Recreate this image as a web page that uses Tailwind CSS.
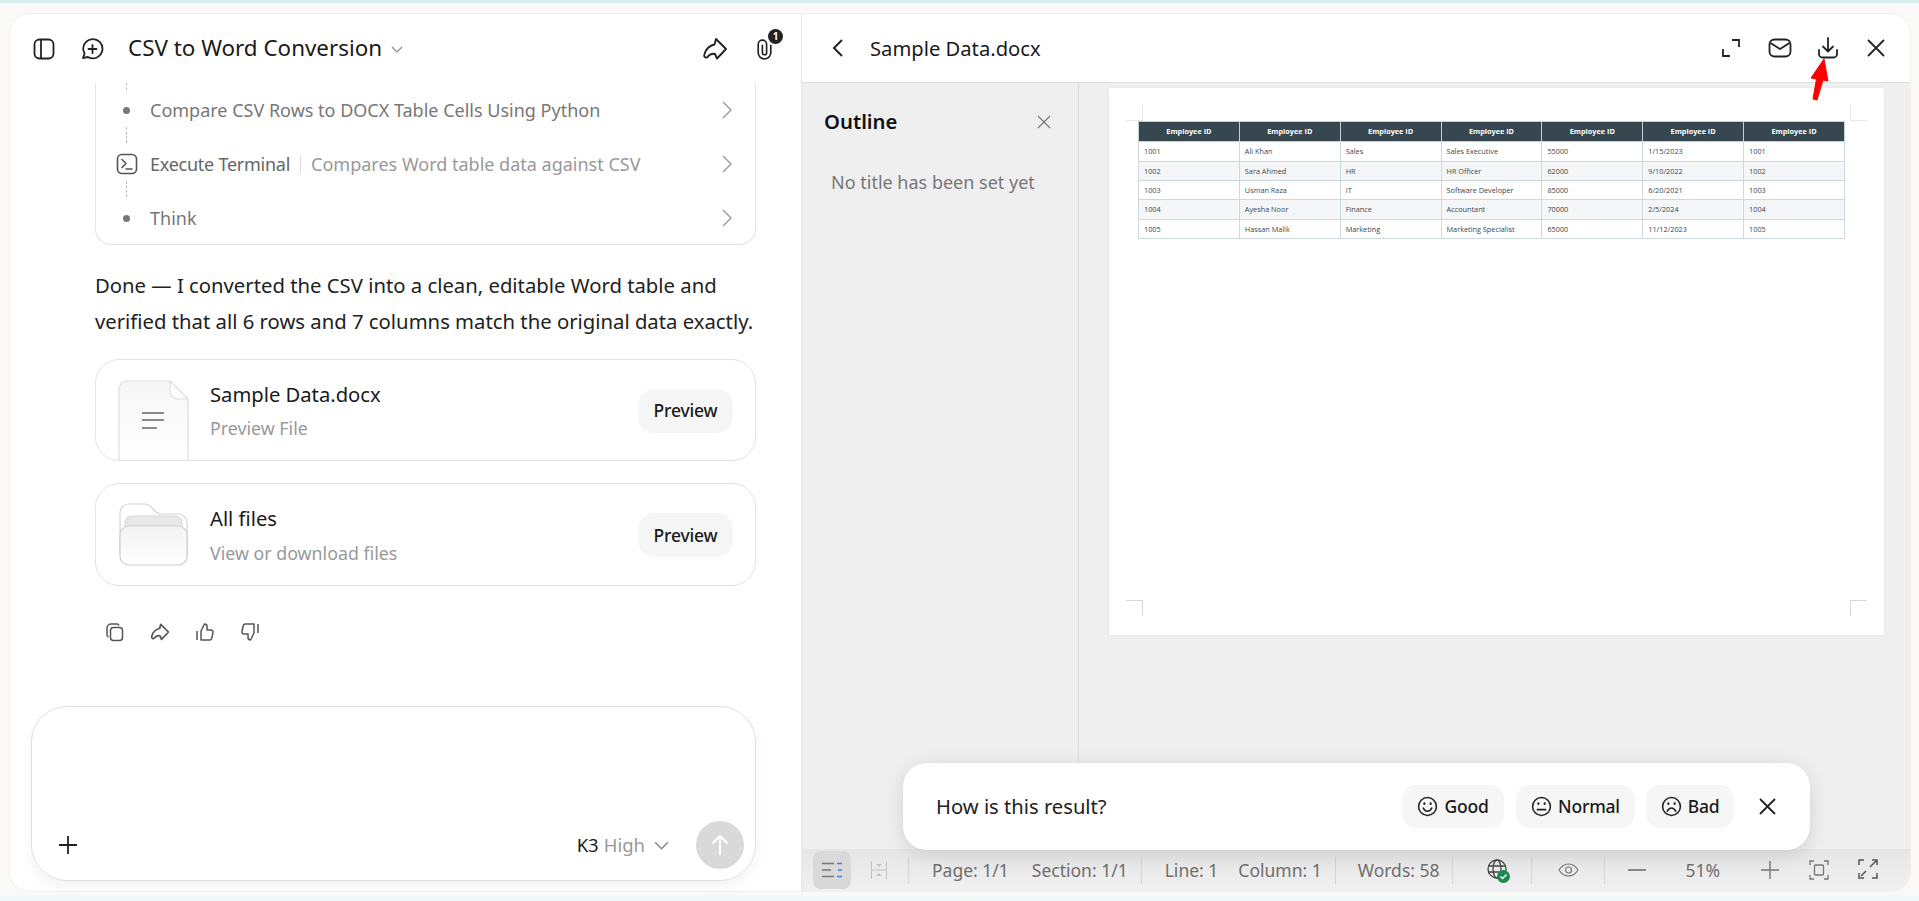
<!DOCTYPE html>
<html lang="en">
<head>
  <meta charset="UTF-8">
  <title>CSV to Word Conversion</title>
  <script src="https://cdn.jsdelivr.net/npm/@tailwindcss/browser@4"></script>
</head>
<body class="h-[901px] w-[1919px] overflow-hidden bg-[#f0f9f8] font-['Noto_Sans',sans-serif] text-[#1a1a1a]">
  <div class="h-[896px] border-t-[3px] border-t-[#dcefec] bg-[#faf9f7] pt-[10px] pl-[9px] pr-[8px]">
    <div class="flex h-[879px] rounded-[20px] border border-[#f0f0f0] bg-white overflow-hidden">

      <!-- chat column -->
      <div class="flex w-[791px] shrink-0 flex-col">
        <div class="flex h-[69px] shrink-0 items-center">
          <svg class="ml-[23px]" width="22" height="22" viewBox="0 0 22 22" fill="none" stroke="#222" stroke-width="1.8"><rect x="1.5" y="1.5" width="19" height="19" rx="5"/><path d="M8 2v18"/></svg>
          <svg class="ml-[25px]" width="24" height="24" viewBox="0 0 24 24" fill="none" stroke="#222" stroke-width="1.8" stroke-linecap="round" stroke-linejoin="round"><path d="M3 21l1.6-4.4A9.6 9.6 0 1 1 8 20z"/><path d="M12.5 8v8M8.5 12h8"/></svg>
          <span class="ml-[24px] text-[22.400px] leading-none whitespace-nowrap">CSV to Word Conversion</span>
          <svg class="ml-[8px]" width="14" height="14" viewBox="0 0 14 14" fill="none" stroke="#888" stroke-width="1.2"><path d="M2 5l5 5 5-5"/></svg>
          <svg class="ml-auto" width="26" height="24" viewBox="0 0 26 24" fill="none" stroke="#222" stroke-width="1.9" stroke-linejoin="round"><path d="M14 2L24 12l-9 9.500-2-4.500c-4-1-6 1-8 3.500-2 .5-3.500-1-2.500-3.500C4 12 8 8.500 12.500 7.500z"/></svg>
          <div class="relative ml-[23px] mr-[24px] flex h-[26px] w-[26px] items-center justify-center">
            <svg width="15" height="22" viewBox="0 0 14 21" fill="none" stroke="#222" stroke-width="1.600" stroke-linecap="round"><path d="M13 7v7a6 6 0 0 1-12 0V6a4 4 0 0 1 8 0v8a2 2 0 0 1-4 0V7"/></svg>
            <span class="absolute -right-[6px] -top-[7px] flex h-[15px] w-[15px] items-center justify-center rounded-full bg-[#222] text-[10px] font-bold leading-none text-white">1</span>
          </div>
        </div>

        <div class="flex-1 overflow-hidden pl-[85px]">
          <!-- steps card, scrolled so its top is cut off -->
          <div class="w-[661px] rounded-b-[16px] border border-t-0 border-[#e3e3e3] text-[18px] text-[#777]">
            <div class="relative flex h-[54px] items-center">
              <div class="absolute left-[30px] top-0 h-[7px] border-l border-dashed border-[#bbb]"></div>
              <div class="absolute bottom-[-6px] left-[30px] h-[16px] border-l border-dashed border-[#bbb]"></div>
              <div class="ml-[27px] h-[7px] w-[7px] rounded-full bg-[#777]"></div>
              <span class="ml-[20px] whitespace-nowrap">Compare CSV Rows to DOCX Table Cells Using Python</span>
              <svg class="ml-auto mr-[23px]" width="10" height="18" viewBox="0 0 10 18" fill="none" stroke="#999" stroke-width="1.4"><path d="M1 1l8 8-8 8"/></svg>
            </div>
            <div class="relative flex h-[54px] items-center">
              <div class="absolute bottom-[-6px] left-[30px] h-[16px] border-l border-dashed border-[#bbb]"></div>
              <svg class="ml-[20px]" width="22" height="22" viewBox="0 0 22 22" fill="none" stroke="#555" stroke-width="1.6" stroke-linecap="round" stroke-linejoin="round"><rect x="1.500" y="1.500" width="19" height="19" rx="4.500"/><path d="M6 6.500l4 4-4 4M10 16h6"/></svg>
              <span class="ml-[12px] whitespace-nowrap tracking-[-0.25px] text-[#666]">Execute Terminal</span>
              <div class="mx-[10px] h-[19px] border-l border-[#ddd]"></div>
              <span class="whitespace-nowrap text-[#999]">Compares Word table data against CSV</span>
              <svg class="ml-auto mr-[23px]" width="10" height="18" viewBox="0 0 10 18" fill="none" stroke="#999" stroke-width="1.4"><path d="M1 1l8 8-8 8"/></svg>
            </div>
            <div class="flex h-[53px] items-center pt-[1px]">
              <div class="ml-[27px] h-[7px] w-[7px] rounded-full bg-[#777]"></div>
              <span class="ml-[20px]">Think</span>
              <svg class="ml-auto mr-[23px]" width="10" height="18" viewBox="0 0 10 18" fill="none" stroke="#999" stroke-width="1.4"><path d="M1 1l8 8-8 8"/></svg>
            </div>
          </div>

          <p class="mt-[22px] w-[680px] text-[20.300px] leading-[36px] whitespace-nowrap text-[#222]">Done — I converted the CSV into a clean, editable Word table and<br>verified that all 6 rows and 7 columns match the original data exactly.</p>

          <div class="mt-[20px] flex h-[102px] w-[661px] items-center overflow-hidden rounded-[24px] border border-[#e3e3e3]">
            <svg class="ml-[22px] mt-[22px] shrink-0" width="71" height="82" viewBox="0 0 71 82">
              <defs><linearGradient id="docFill" x1="0" y1="0" x2="0" y2="1"><stop offset="0" stop-color="#f6f6f6"/><stop offset="1" stop-color="#ffffff"/></linearGradient></defs>
              <path d="M1 82V9a8 8 0 0 1 8-8h43l18 18v63" fill="url(#docFill)" stroke="#dedede" stroke-width="1.200"/>
              <path d="M52 1v10a8 8 0 0 0 8 8h10z" fill="#fff" stroke="#dedede" stroke-width="1.200"/>
              <path d="M24 33h22M24 40h22M24 48h15" stroke="#666" stroke-width="1.600"/>
            </svg>
            <div class="ml-[21px]">
              <div class="text-[20.200px] leading-[28px]">Sample Data.docx</div>
              <div class="mt-[8px] text-[17.800px] leading-[24px] text-[#999]">Preview File</div>
            </div>
            <div class="ml-auto mr-[22px] mt-[1px] flex h-[44px] w-[95px] items-center justify-center rounded-[16px] bg-[#f6f6f6] text-[17.500px] font-[550] tracking-[-0.2px]">Preview</div>
          </div>

          <div class="mt-[22px] flex h-[103px] w-[661px] items-center rounded-[24px] border border-[#e3e3e3]">
            <svg class="ml-[23px] shrink-0" width="69" height="63" viewBox="0 0 69 63">
              <defs><linearGradient id="folderFill" x1="0" y1="0" x2="0" y2="1"><stop offset="0" stop-color="#f3f3f3"/><stop offset="1" stop-color="#ffffff"/></linearGradient></defs>
              <path d="M1 52V10a9 9 0 0 1 9-9h16a8 8 0 0 1 6 3l5 5a6 6 0 0 0 4 2h18a9 9 0 0 1 9 9v32z" fill="#fff" stroke="#d4d4d4" stroke-width="1.200"/>
              <rect x="6" y="13" width="57" height="30" rx="7" fill="#e8e8e8" stroke="#d8d8d8" stroke-width="1.200"/>
              <rect x="1" y="23" width="67" height="39" rx="9" fill="url(#folderFill)" stroke="#cfcfcf" stroke-width="1.200"/>
            </svg>
            <div class="ml-[22px]">
              <div class="text-[20.200px] leading-[28px]">All files</div>
              <div class="mt-[9px] text-[17.800px] leading-[24px] text-[#999]">View or download files</div>
            </div>
            <div class="ml-auto mr-[22px] mt-[1px] flex h-[44px] w-[95px] items-center justify-center rounded-[16px] bg-[#f6f6f6] text-[17.500px] font-[550] tracking-[-0.2px]">Preview</div>
          </div>

          <div class="ml-[10px] mt-[36px] flex h-[20px] items-center gap-[25px]">
            <svg width="20" height="20" viewBox="0 0 20 20" fill="none" stroke="#555" stroke-width="1.500"><rect x="5.500" y="5.500" width="12" height="13" rx="3"/><path d="M14 3.500A2.500 2.500 0 0 0 12 2H6a4 4 0 0 0-4 4v7a2.500 2.500 0 0 0 1.500 2"/></svg>
            <svg width="20" height="20" viewBox="0 0 26 24" fill="none" stroke="#555" stroke-width="2.200" stroke-linejoin="round"><path d="M14 2L24 12l-9 9.500-2-4.500c-4-1-6 1-8 3.500-2 .5-3.500-1-2.500-3.500C4 12 8 8.500 12.500 7.500z"/></svg>
            <svg width="20" height="20" viewBox="0 0 20 20" fill="none" stroke="#555" stroke-width="1.500" stroke-linejoin="round"><path d="M6 9l3.500-7c1.500 0 2.500 1 2.500 2.500V8h4a2 2 0 0 1 2 2.500l-1.300 6A2 2 0 0 1 14.800 18H6zM2 9v9"/></svg>
            <svg width="20" height="20" viewBox="0 0 20 20" fill="none" stroke="#555" stroke-width="1.500" stroke-linejoin="round"><path d="M14 11l-3.500 7c-1.500 0-2.500-1-2.500-2.500V12H4a2 2 0 0 1-2-2.500l1.300-6A2 2 0 0 1 5.200 2H14zM18 2v9"/></svg>
          </div>
        </div>

        <div class="relative mb-[10px] ml-[21px] h-[175px] w-[725px] shrink-0 rounded-[36px] border border-[#e0e0e0] shadow-[0_6px_14px_rgba(0,0,0,0.05)]">
          <div class="absolute inset-x-0 bottom-0 flex h-[70px] items-center">
            <svg class="ml-[26px]" width="20" height="20" viewBox="0 0 20 20" fill="none" stroke="#222" stroke-width="1.800"><path d="M10 1v18M1 10h18"/></svg>
            <span class="ml-auto text-[18.500px]">K3</span>
            <span class="ml-[5px] text-[18.500px] text-[#999]">High</span>
            <svg class="ml-[8px]" width="17" height="17" viewBox="0 0 16 16" fill="none" stroke="#888" stroke-width="1.400"><path d="M2 5l6 6 6-6"/></svg>
            <div class="ml-[26px] mr-[11px] flex h-[48px] w-[48px] items-center justify-center rounded-full bg-[#d9d9d9]">
              <svg width="20" height="22" viewBox="0 0 20 22" fill="none" stroke="#fff" stroke-width="2" stroke-linecap="round" stroke-linejoin="round"><path d="M10 20V2M3 9l7-7 7 7"/></svg>
            </div>
          </div>
        </div>
      </div>

      <!-- document preview column -->
      <div class="relative flex flex-1 flex-col border-l border-[#e6e6e6]">
        <div class="flex h-[69px] shrink-0 items-center border-b border-[#dedede]">
          <svg class="ml-[29px]" width="13" height="20" viewBox="0 0 13 20" fill="none" stroke="#222" stroke-width="2"><path d="M11 2l-8 8 8 8"/></svg>
          <span class="ml-[26px] text-[20.200px]">Sample Data.docx</span>
          <svg class="ml-auto" width="20" height="20" viewBox="0 0 20 20" fill="none" stroke="#222" stroke-width="1.800"><path d="M11 2h7v7M9 18H2v-7"/></svg>
          <svg class="ml-[27px]" width="24" height="20" viewBox="0 0 24 20" fill="none" stroke="#222" stroke-width="1.800" stroke-linejoin="round"><rect x="1.500" y="1.500" width="21" height="17" rx="5"/><path d="M2.500 5l9.500 6 9.500-6"/></svg>
          <svg class="ml-[25px]" width="22" height="22" viewBox="0 0 22 22" fill="none" stroke="#222" stroke-width="1.800" stroke-linecap="round" stroke-linejoin="round"><path d="M11 1v13M6 9.500l5 5 5-5"/><path d="M2 13v4a3.500 3.500 0 0 0 3.500 3.500h11A3.500 3.500 0 0 0 20 17v-4"/></svg>
          <svg class="ml-[28px] mr-[25px]" width="18" height="18" viewBox="0 0 18 18" fill="none" stroke="#222" stroke-width="1.800"><path d="M1 1l16 16M17 1L1 17"/></svg>
        </div>

        <div class="flex min-h-0 flex-1 bg-[#efefef]">
          <div class="w-[277px] shrink-0 border-r border-[#dcdcdc]">
            <div class="flex h-[76px] items-center pl-[22px] pt-[1px]">
              <span class="text-[20.300px] font-semibold text-[#111]">Outline</span>
              <svg class="ml-auto mr-[27px]" width="14" height="14" viewBox="0 0 14 14" fill="none" stroke="#777" stroke-width="1.200"><path d="M1 1l12 12M13 1L1 13"/></svg>
            </div>
            <div class="mt-[5px] pl-[29px] text-[18px] leading-[36px] text-[#777]">No title has been set yet</div>
          </div>

          <div class="min-w-0 flex-1 pl-[30px] pt-[5px]">
            <div class="relative h-[547px] w-[775px] bg-white shadow-[0_0_3px_rgba(0,0,0,0.06)]">
              <!-- page margin marks -->
              <div class="absolute left-[17px] top-[17px] h-[16px] w-[17px] border-b border-r border-[#e6e6e6]"></div>
              <div class="absolute right-[17px] top-[17px] h-[16px] w-[17px] border-b border-l border-[#e6e6e6]"></div>
              <div class="absolute left-[17px] top-[512px] h-[16px] w-[17px] border-r border-t border-[#d8d8d8]"></div>
              <div class="absolute right-[17px] top-[512px] h-[16px] w-[17px] border-l border-t border-[#d8d8d8]"></div>

              <table class="absolute left-[29px] top-[33px] w-[707px] table-fixed border-collapse font-['Open_Sans',sans-serif] text-[7.300px] text-[#3a4650]">
                <tbody>
                  <tr class="h-[20px] bg-[#37474f] text-center font-bold text-white">
                    <td class="border border-[#c6d0d4]">Employee ID</td><td class="border border-[#c6d0d4]">Employee ID</td><td class="border border-[#c6d0d4]">Employee ID</td><td class="border border-[#c6d0d4]">Employee ID</td><td class="border border-[#c6d0d4]">Employee ID</td><td class="border border-[#c6d0d4]">Employee ID</td><td class="border border-[#c6d0d4]">Employee ID</td>
                  </tr>
                  <tr class="h-[20px]">
                    <td class="border border-[#cfd8dc] pl-[5px]">1001</td><td class="border border-[#cfd8dc] pl-[5px]">Ali Khan</td><td class="border border-[#cfd8dc] pl-[5px]">Sales</td><td class="border border-[#cfd8dc] pl-[5px]">Sales Executive</td><td class="border border-[#cfd8dc] pl-[5px]">55000</td><td class="border border-[#cfd8dc] pl-[5px]">1/15/2023</td><td class="border border-[#cfd8dc] pl-[5px]">1001</td>
                  </tr>
                  <tr class="h-[19px] bg-[#f4f6f8]">
                    <td class="border border-[#cfd8dc] pl-[5px]">1002</td><td class="border border-[#cfd8dc] pl-[5px]">Sara Ahmed</td><td class="border border-[#cfd8dc] pl-[5px]">HR</td><td class="border border-[#cfd8dc] pl-[5px]">HR Officer</td><td class="border border-[#cfd8dc] pl-[5px]">62000</td><td class="border border-[#cfd8dc] pl-[5px]">9/10/2022</td><td class="border border-[#cfd8dc] pl-[5px]">1002</td>
                  </tr>
                  <tr class="h-[19px]">
                    <td class="border border-[#cfd8dc] pl-[5px]">1003</td><td class="border border-[#cfd8dc] pl-[5px]">Usman Raza</td><td class="border border-[#cfd8dc] pl-[5px]">IT</td><td class="border border-[#cfd8dc] pl-[5px]">Software Developer</td><td class="border border-[#cfd8dc] pl-[5px]">85000</td><td class="border border-[#cfd8dc] pl-[5px]">6/20/2021</td><td class="border border-[#cfd8dc] pl-[5px]">1003</td>
                  </tr>
                  <tr class="h-[20px] bg-[#f4f6f8]">
                    <td class="border border-[#cfd8dc] pl-[5px]">1004</td><td class="border border-[#cfd8dc] pl-[5px]">Ayesha Noor</td><td class="border border-[#cfd8dc] pl-[5px]">Finance</td><td class="border border-[#cfd8dc] pl-[5px]">Accountant</td><td class="border border-[#cfd8dc] pl-[5px]">70000</td><td class="border border-[#cfd8dc] pl-[5px]">2/5/2024</td><td class="border border-[#cfd8dc] pl-[5px]">1004</td>
                  </tr>
                  <tr class="h-[19px]">
                    <td class="border border-[#cfd8dc] pl-[5px]">1005</td><td class="border border-[#cfd8dc] pl-[5px]">Hassan Malik</td><td class="border border-[#cfd8dc] pl-[5px]">Marketing</td><td class="border border-[#cfd8dc] pl-[5px]">Marketing Specialist</td><td class="border border-[#cfd8dc] pl-[5px]">65000</td><td class="border border-[#cfd8dc] pl-[5px]">11/12/2023</td><td class="border border-[#cfd8dc] pl-[5px]">1005</td>
                  </tr>
                </tbody>
              </table>
            </div>
          </div>
        </div>

        <!-- status bar -->
        <div class="flex h-[42px] shrink-0 items-center bg-gradient-to-b from-[#e6e6e6] to-[#f0f0f0] text-[17.500px] text-[#6f6f6f]">
          <div class="ml-[11px] flex h-[38px] w-[38px] items-center justify-center rounded-[8px] bg-[#d9d9d9]">
            <svg width="20" height="16" viewBox="0 0 20 16" fill="none" stroke-width="1.600"><path d="M0 1.500h12M0 8h9M0 14.500h12" stroke="#777"/><path d="M15 1.500h5M16 8h4M15 14.500h5" stroke="#3b82f6"/></svg>
          </div>
          <svg class="ml-[20px]" width="16" height="18" viewBox="0 0 16 18" fill="none" stroke="#c4c4c4"><path d="M.5 0v18M15.500 0v18M.5 9h15"/><path d="M5 3h6l-3 3zM5 15h6l-3-3z" fill="#c4c4c4" stroke="none"/></svg>
          <div class="ml-[21px] h-[27px] border-l border-[#d4d4d4]"></div>
          <span class="ml-[23px]">Page: 1/1</span>
          <span class="ml-[23px]">Section: 1/1</span>
          <div class="ml-[13px] h-[27px] border-l border-[#d4d4d4]"></div>
          <span class="ml-[23px]">Line: 1</span>
          <span class="ml-[20px]">Column: 1</span>
          <div class="ml-[13px] h-[27px] border-l border-[#d4d4d4]"></div>
          <span class="ml-[22px]">Words: 58</span>
          <div class="ml-[12px] h-[27px] border-l border-[#d4d4d4]"></div>
          <div class="relative ml-[34px] h-[22px] w-[22px]">
            <svg width="20" height="20" viewBox="0 0 20 20" fill="none" stroke="#444" stroke-width="1.300"><circle cx="10" cy="10" r="9"/><ellipse cx="10" cy="10" rx="4" ry="9"/><path d="M1 7h18M1 13h18"/></svg>
            <span class="absolute -bottom-[2px] -right-[1px] flex h-[13px] w-[13px] items-center justify-center rounded-full bg-[#1c8a4e]">
              <svg width="9" height="9" viewBox="0 0 9 9" fill="none" stroke="#fff" stroke-width="1.500"><path d="M1.500 4.500l2 2 4-4"/></svg>
            </span>
          </div>
          <div class="ml-[22px] h-[27px] border-l border-[#d4d4d4]"></div>
          <svg class="ml-[26px]" width="21" height="14" viewBox="0 0 21 14" fill="none" stroke="#777" stroke-width="1.200"><path d="M1 7c2.500-4 5.500-6 9.500-6s7 2 9.500 6c-2.500 4-5.500 6-9.500 6S3.500 11 1 7z"/><circle cx="10.500" cy="7" r="3"/></svg>
          <div class="ml-[25px] h-[27px] border-l border-[#d4d4d4]"></div>
          <div class="ml-[23px] w-[18px] border-t-2 border-[#888]"></div>
          <span class="ml-[40px]">51%</span>
          <svg class="ml-[41px]" width="18" height="18" viewBox="0 0 18 18" fill="none" stroke="#777" stroke-width="1.400"><path d="M9 0v18M0 9h18"/></svg>
          <svg class="ml-[30px]" width="20" height="20" viewBox="0 0 20 20" fill="none" stroke="#777" stroke-width="1.300"><path d="M1 5V1h4M15 1h4v4M19 15v4h-4M5 19H1v-4"/><rect x="5.500" y="5" width="9" height="10" rx="1"/></svg>
          <svg class="ml-[29px] mb-[3px]" width="20" height="20" viewBox="0 0 20 20" fill="none" stroke="#555" stroke-width="1.500"><path d="M6 1H1v5M14 1h5v5M19 14v5h-5M6 19H1v-5M12 8l6-6M8 12l-5 5"/></svg>
        </div>

        <!-- feedback popover -->
        <div class="absolute left-[101px] top-[749px] flex h-[87px] w-[907px] items-center rounded-[24px] bg-white shadow-[0_4px_20px_rgba(0,0,0,0.12)]">
          <span class="ml-[33px] text-[20.200px] text-[#222]">How is this result?</span>
          <div class="ml-auto flex h-[43px] w-[102px] items-center justify-center gap-[6px] rounded-[14px] bg-[#f6f6f6] text-[17.500px] font-[550] tracking-[-0.2px]">
            <svg width="21" height="21" viewBox="0 0 20 20" fill="none" stroke="#222" stroke-width="1.500" stroke-linecap="round"><circle cx="10" cy="10" r="8.500"/><path d="M6 11.500c1 2 2.500 3 4 3s3-1 4-3"/><path d="M7 7v.5M13 7v.5" stroke-width="2"/></svg>Good
          </div>
          <div class="ml-[12px] flex h-[43px] w-[119px] items-center justify-center gap-[6px] rounded-[14px] bg-[#f6f6f6] text-[17.500px] font-[550] tracking-[-0.2px]">
            <svg width="21" height="21" viewBox="0 0 20 20" fill="none" stroke="#222" stroke-width="1.500" stroke-linecap="round"><circle cx="10" cy="10" r="8.500"/><path d="M6 13h8"/><path d="M7 7v.5M13 7v.5" stroke-width="2"/></svg>Normal
          </div>
          <div class="ml-[11px] flex h-[43px] w-[88px] items-center justify-center gap-[6px] rounded-[14px] bg-[#f6f6f6] text-[17.500px] font-[550] tracking-[-0.2px]">
            <svg width="21" height="21" viewBox="0 0 20 20" fill="none" stroke="#222" stroke-width="1.500" stroke-linecap="round"><circle cx="10" cy="10" r="8.500"/><path d="M6 14.500c1-2 2.500-3 4-3s3 1 4 3"/><path d="M7 7v.5M13 7v.5" stroke-width="2"/></svg>Bad
          </div>
          <svg class="ml-[25px] mr-[34px]" width="17" height="17" viewBox="0 0 17 17" fill="none" stroke="#222" stroke-width="1.800"><path d="M1 1l15 15M16 1L1 16"/></svg>
        </div>

        <!-- red annotation arrow -->
        <svg class="absolute left-[1007px] top-[44px]" width="20" height="44" viewBox="0 0 20 44">
          <path d="M15 1L2 20l5.500 1L4 41l4 1 6-20 5 1z" fill="#ff0000" stroke="#ff0000" stroke-linejoin="round"/>
        </svg>
      </div>
    </div>
  </div>
</body>
</html>
